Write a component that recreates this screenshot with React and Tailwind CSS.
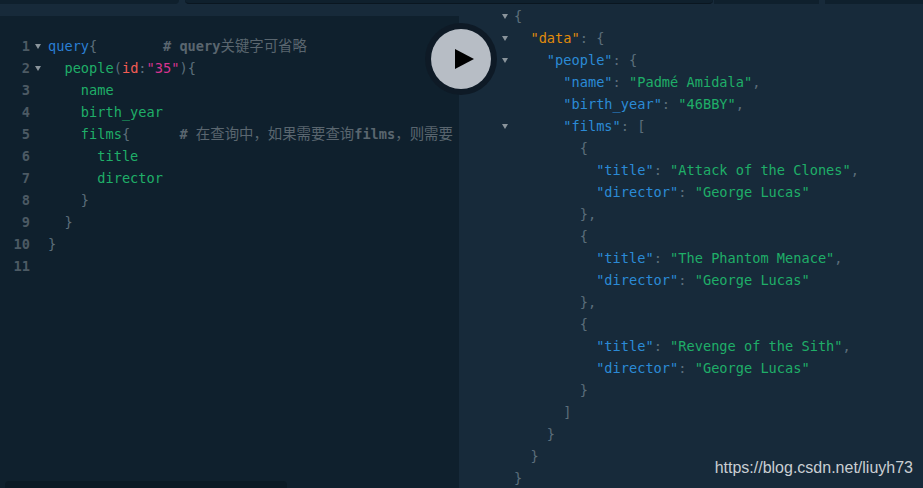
const blue = "text-[#2a7ed3]";
const green = "text-[#1fae68]";
const punct = "text-[#5c6e7a]";
const comment = "text-[#5a666f]";
const key = "text-[#2b8ad6]";

// the comment font: latin is bold, CJK sits a little larger
const Latin = ({ children }) => <span className="font-bold">{children}</span>;
const Cjk = ({ children }) => <span className="text-[14.4px]">{children}</span>;

const queryLines = [
  { fold: true, code: <><span className={blue}>query</span><span className={punct}>{"{"}</span><span className={comment}>{"        "}<Latin># query</Latin><Cjk>关键字可省略</Cjk></span></> },
  { fold: true, code: <><span className={green}>{"  people"}</span><span className={punct}>(</span><span className="text-[#f25c54]">id</span><span className={punct}>:</span><span className="text-[#d6338f]">"35"</span><span className={punct}>{"){"}</span></> },
  { code: <span className={green}>{"    name"}</span> },
  { code: <span className={green}>{"    birth_year"}</span> },
  { code: <><span className={green}>{"    films"}</span><span className={punct}>{"{"}</span><span className={comment}>{"      "}<Latin># </Latin><Cjk>在查询中，如果需要查询</Cjk><Latin>films</Latin><Cjk>，则需要</Cjk></span></> },
  { code: <span className={green}>{"      title"}</span> },
  { code: <span className={green}>{"      director"}</span> },
  { code: <span className={punct}>{"    }"}</span> },
  { code: <span className={punct}>{"  }"}</span> },
  { code: <span className={punct}>{"}"}</span> },
  { code: "" },
];

function Pair({ indent, name, value, comma }) {
  return (
    <>
      {indent}
      <span className={key}>"{name}"</span>
      <span className={punct}>: </span>
      <span className={green}>"{value}"</span>
      {comma && <span className={punct}>,</span>}
    </>
  );
}

function Open({ indent, name, bracket, color }) {
  return (
    <>
      {indent}
      <span className={color || key}>"{name}"</span>
      <span className={punct}>: {bracket}</span>
    </>
  );
}

const p = (text) => <span className={punct}>{text}</span>;

const resultLines = [
  { fold: true, code: p("{") },
  { fold: true, code: <Open indent="  " name="data" bracket="{" color="text-[#e08a0b]" /> },
  { fold: true, code: <Open indent="    " name="people" bracket="{" /> },
  { code: <Pair indent="      " name="name" value="Padmé Amidala" comma /> },
  { code: <Pair indent="      " name="birth_year" value="46BBY" comma /> },
  { fold: true, code: <Open indent="      " name="films" bracket="[" /> },
  { code: p("        {") },
  { code: <Pair indent="          " name="title" value="Attack of the Clones" comma /> },
  { code: <Pair indent="          " name="director" value="George Lucas" /> },
  { code: p("        },") },
  { code: p("        {") },
  { code: <Pair indent="          " name="title" value="The Phantom Menace" comma /> },
  { code: <Pair indent="          " name="director" value="George Lucas" /> },
  { code: p("        },") },
  { code: p("        {") },
  { code: <Pair indent="          " name="title" value="Revenge of the Sith" comma /> },
  { code: <Pair indent="          " name="director" value="George Lucas" /> },
  { code: p("        }") },
  { code: p("      ]") },
  { code: p("    }") },
  { code: p("  }") },
  { code: p("}") },
];

function Arrow() {
  return <span className="block h-0 w-0 border-x-[3px] border-t-[5px] border-x-transparent border-t-[#8a949b]" />;
}

export default function App() {
  return (
    <div className="relative flex h-[488px] w-[923px] flex-col overflow-hidden bg-[#172a3a] font-['DejaVu_Sans_Mono','Noto_Sans_CJK_SC',monospace] text-[13.65px] leading-[22px]">
      <div className="flex h-[4px] shrink-0 bg-[#172a3a]">
        <div className="w-[179px] rounded-br-sm bg-[#0f202d]" />
        <div className="ml-[6px] w-[528px] rounded-b-md border-b border-[#0a1620] bg-[#0f202d]" />
        <div className="ml-px w-[105px] bg-[#0f202d]" />
        <div className="ml-[6px] flex-1 bg-[#0f202d]" />
      </div>
      <div className="flex min-h-0 flex-1">
        <div className="relative mt-[12px] w-[459px] shrink-0 overflow-hidden bg-[#0f202d] pt-[19px]">
          {queryLines.map((line, i) => (
            <div key={i} className="flex h-[22px] items-center whitespace-pre">
              <span className="w-[30px] shrink-0 text-right font-bold text-[#4c5a64]">{i + 1}</span>
              <span className="flex w-[18px] shrink-0 justify-center pr-[3px]">{line.fold && <Arrow />}</span>
              <span>{line.code}</span>
            </div>
          ))}
          <div className="absolute bottom-0 left-[5px] h-[7px] w-[282px] rounded-t-sm bg-[#0b1a25]" />
        </div>
        <div className="min-w-0 flex-1 overflow-hidden pt-[1px]">
          {resultLines.map((line, i) => (
            <div key={i} className="flex h-[22px] items-center whitespace-pre">
              <span className="flex w-[56px] shrink-0 justify-end pr-[7px]">{line.fold && <Arrow />}</span>
              <span className="-ml-px">{line.code}</span>
            </div>
          ))}
        </div>
      </div>
      <div className="absolute left-[425px] top-[23px] flex h-[72px] w-[72px] items-center justify-center rounded-full bg-[#0e1a26]">
        <div className="flex h-[60px] w-[60px] items-center justify-center rounded-full bg-[#b7bdc5]">
          <svg className="ml-[6px]" width="19" height="20" viewBox="0 0 19 20"><path d="M0 0 L19 10 L0 20 Z" fill="#000" /></svg>
        </div>
      </div>
      <div className="absolute bottom-[10px] right-[10px] font-['Liberation_Sans',sans-serif] text-[16px] leading-[20px] text-[#c9ced2]">https://blog.csdn.net/liuyh73</div>
    </div>
  );
}
